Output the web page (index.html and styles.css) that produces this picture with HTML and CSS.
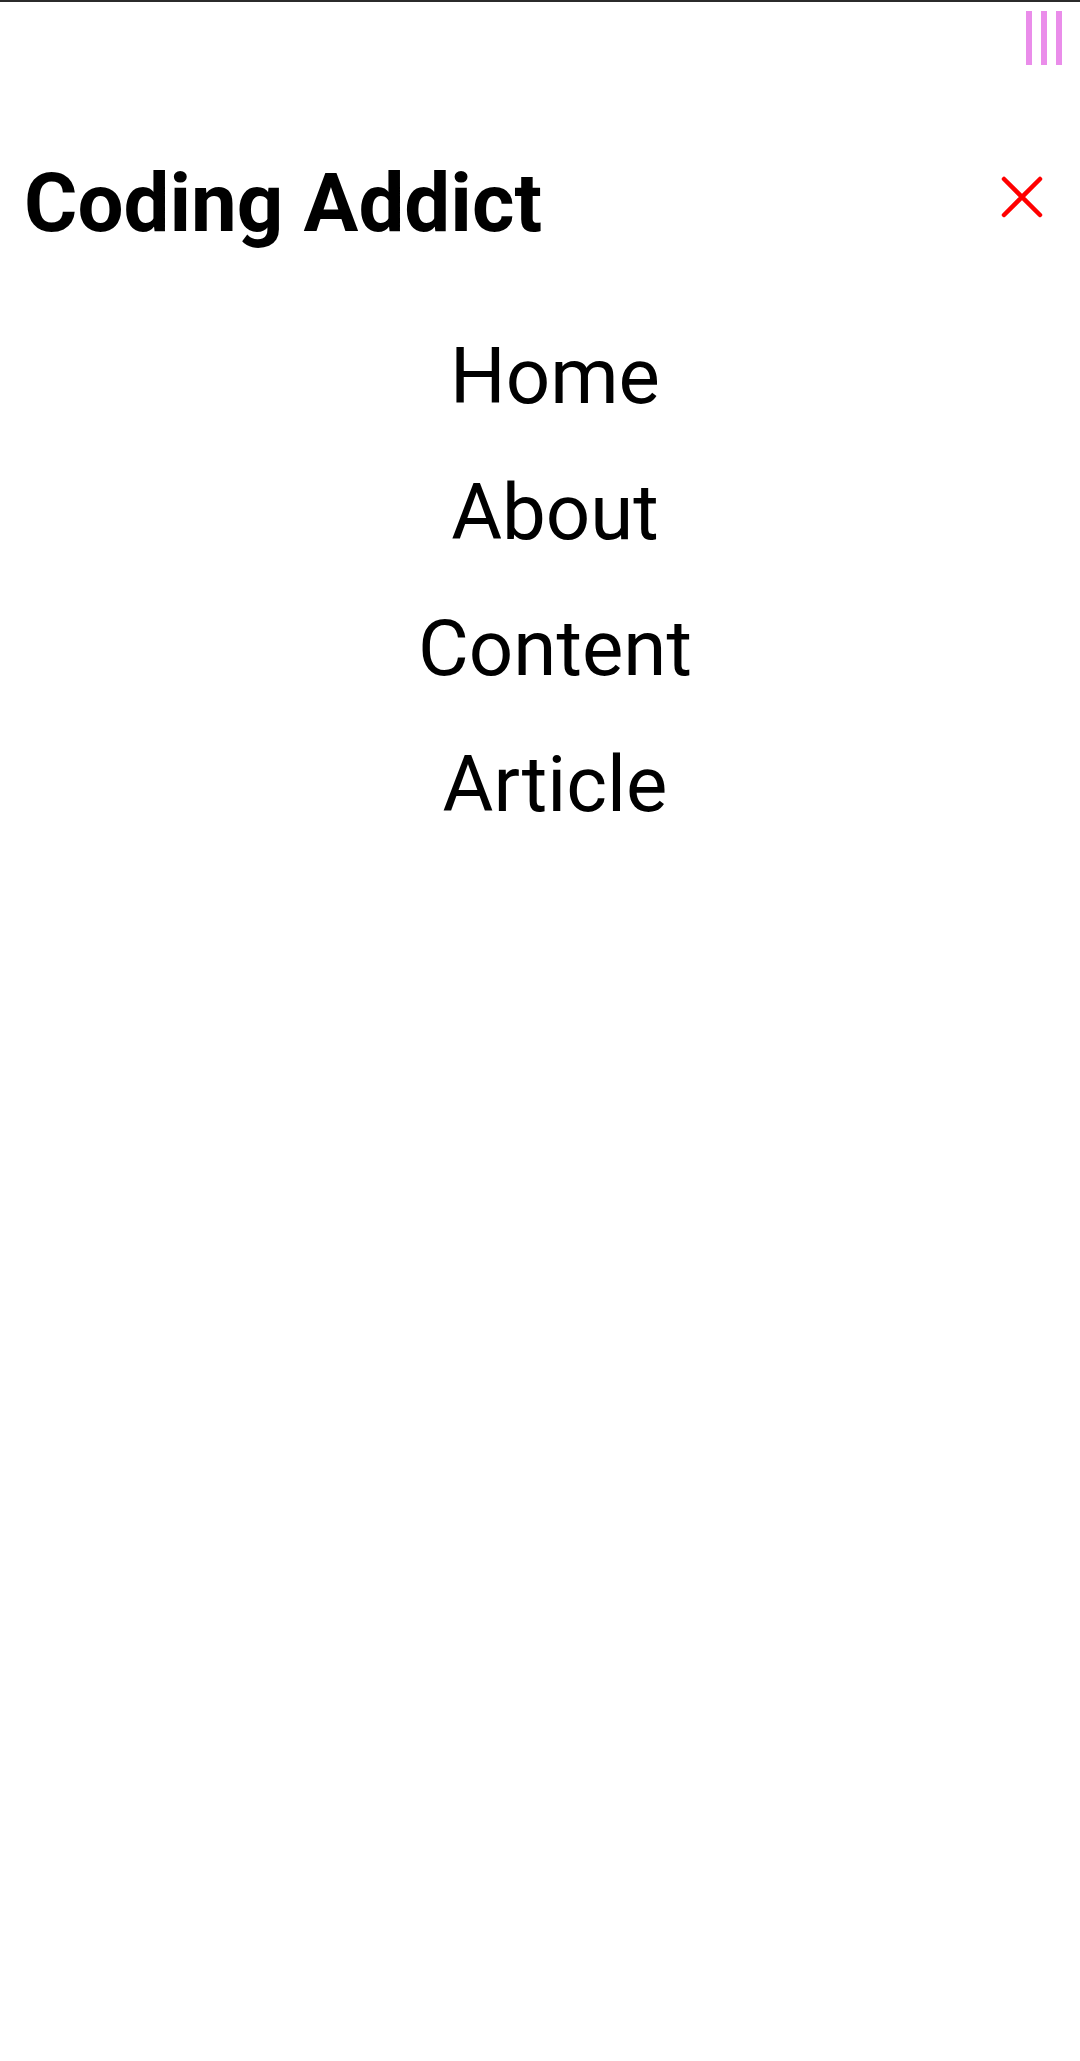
FILE: index.html
```html
<!DOCTYPE html>
<html lang="en">
<head>
<meta charset="utf-8">
<title>Coding Addict</title>
<link rel="stylesheet" href="styles.css">
</head>
<body>
<div class="topline"></div>
<div class="toggle-row">
  <button class="toggle" aria-label="menu">
    <span class="bar"></span><span class="bar"></span><span class="bar"></span>
  </button>
</div>
<aside class="sidebar">
  <header class="sidebar-header">
    <h1 class="logo">Coding Addict</h1>
    <button class="close-btn" aria-label="close">
      <svg width="44" height="44" viewBox="0 0 44 44"><path d="M4 4 L40 40 M40 4 L4 40" stroke="#ff0000" stroke-width="4.5" stroke-linecap="round" fill="none"/></svg>
    </button>
  </header>
  <ul class="links">
    <li><a href="#">Home</a></li>
    <li><a href="#">About</a></li>
    <li><a href="#">Content</a></li>
    <li><a href="#">Article</a></li>
  </ul>
</aside>
</body>
</html>
```
FILE: styles.css
```css
* { box-sizing: border-box; }
html, body { margin: 0; padding: 0; background: #fff; }
body { font-family: Roboto, "Noto Sans", sans-serif; color: #000; }
.topline { height: 2px; background: #2b2b2b; }
.toggle-row { display: flex; justify-content: flex-end; padding: 9px 18px 0 0; }
.toggle { display: flex; gap: 9px; background: none; border: 0; padding: 0; cursor: pointer; }
.bar { display: block; width: 6px; height: 54px; background: #ea8dea; }
.sidebar-header { display: flex; align-items: flex-start; justify-content: space-between; padding: 90px 36px 0 24px; }
.logo { margin: 0; font-size: 81.6px; font-weight: 700; line-height: 1.2; }
.close-btn { background: none; border: 0; padding: 0; margin-top: 20px; display: flex; }
.links { list-style: none; margin: 0; padding: 56px 0 0 30px; text-align: center; }
.links li { height: 136px; display: flex; align-items: center; justify-content: center; }
.links a { text-decoration: none; color: #000; font-size: 78px; line-height: 1; }
```
